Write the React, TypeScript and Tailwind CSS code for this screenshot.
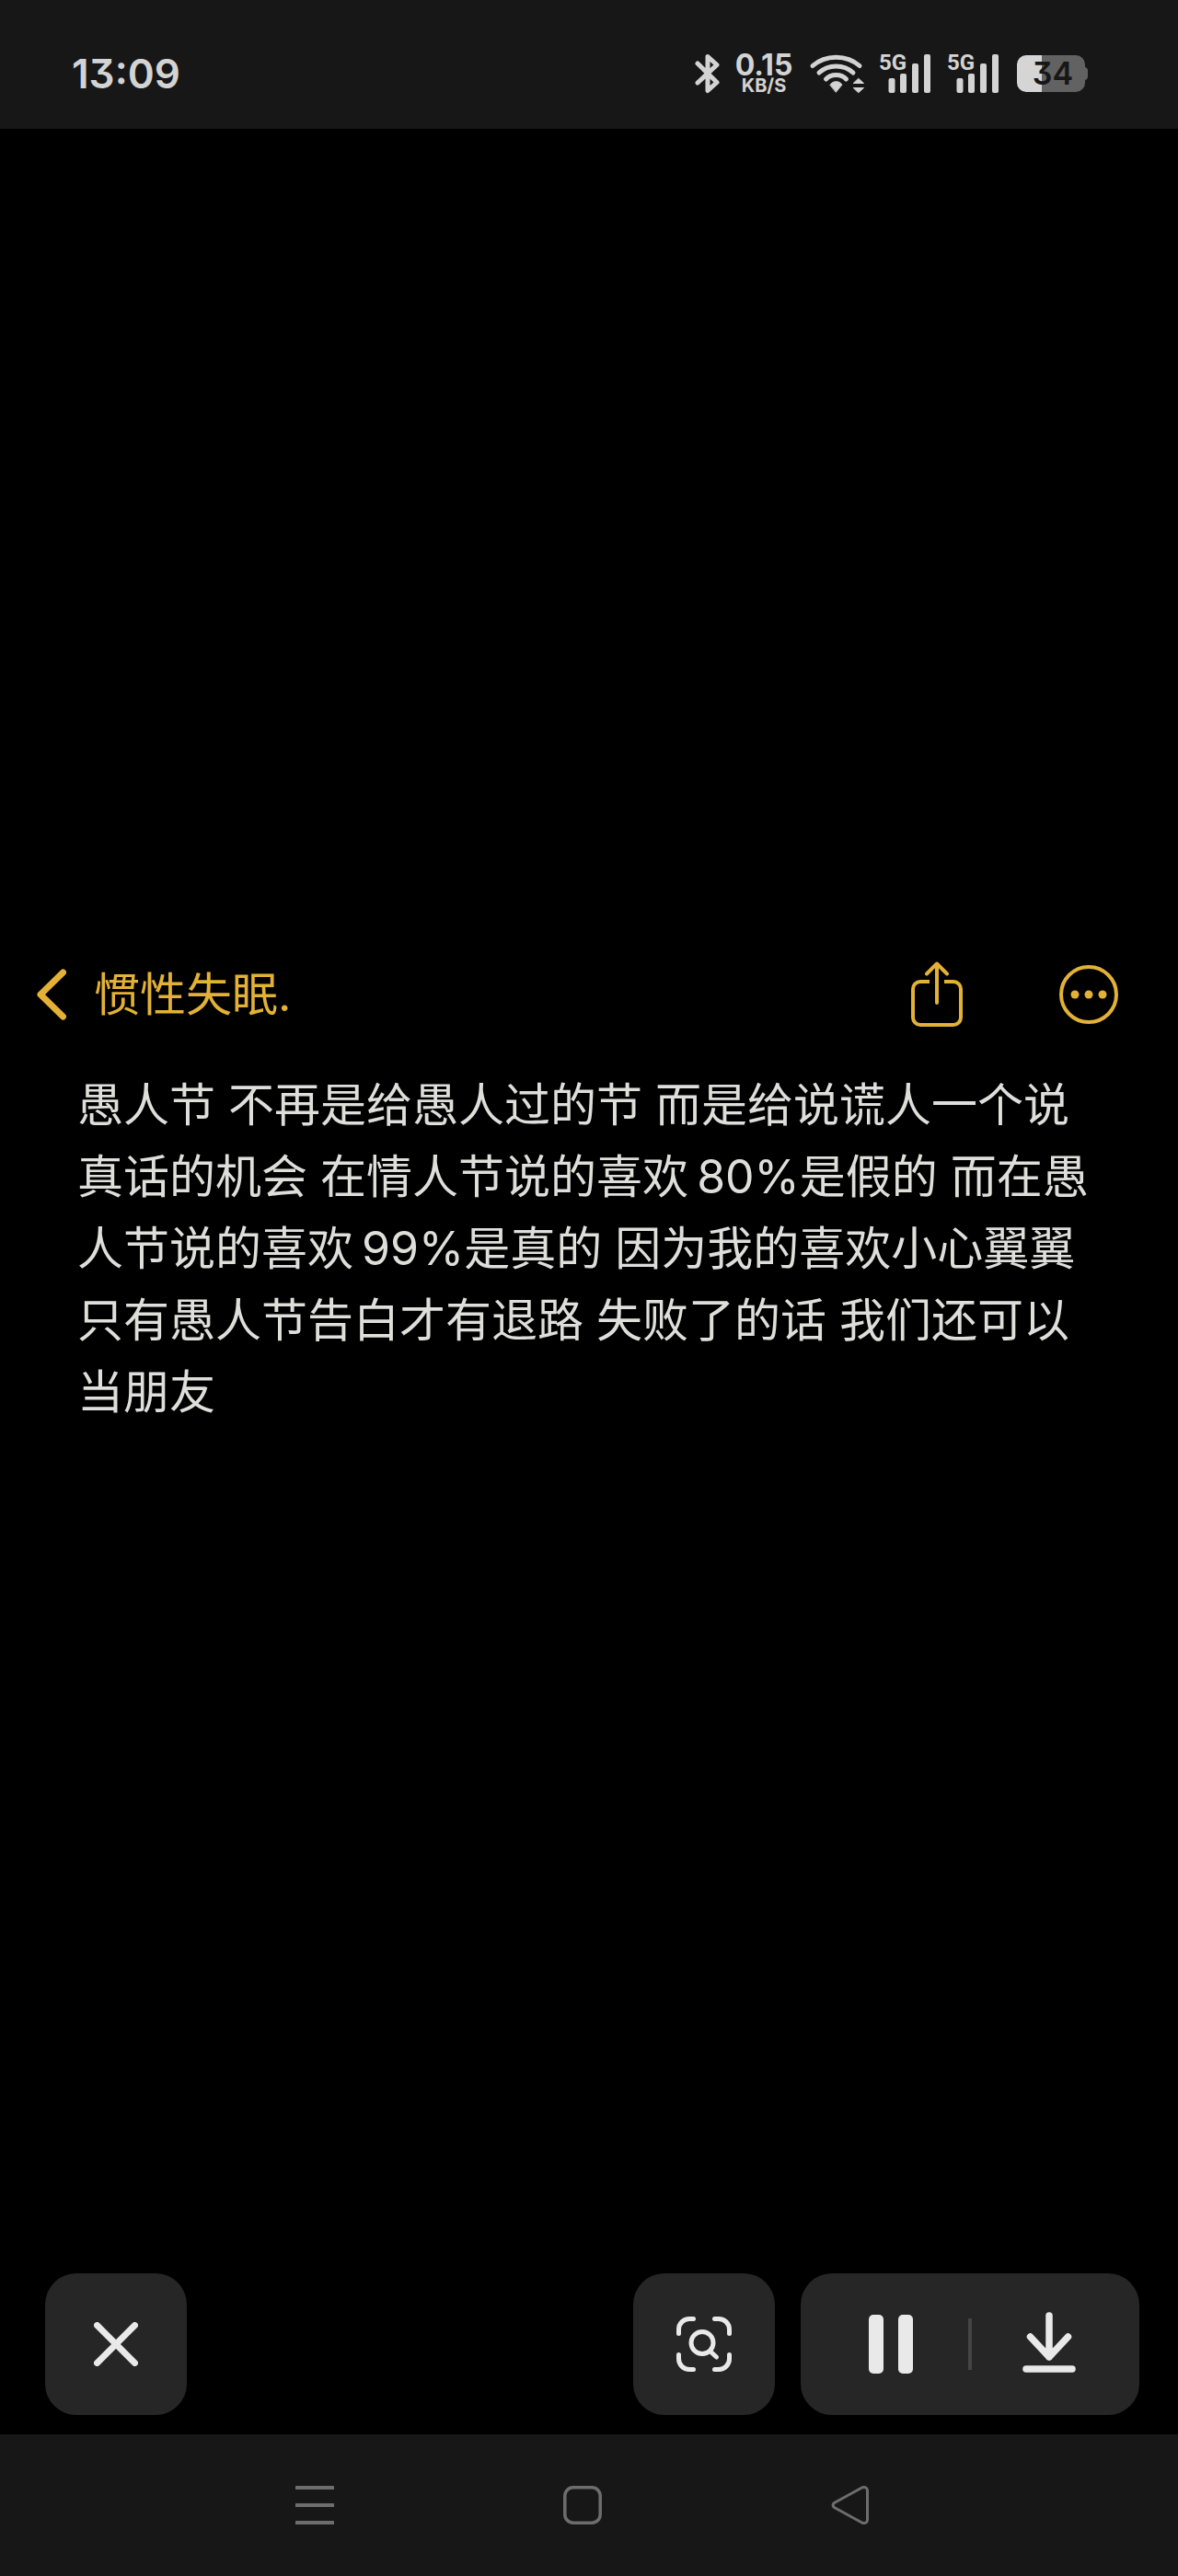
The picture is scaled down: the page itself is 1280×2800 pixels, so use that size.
import React from 'react';

const SignalIcon: React.FC = () => (
  <div className="relative w-[56px] h-[44px]">
    <span className="absolute left-0 top-0 font-['Roboto',sans-serif] text-[24px] leading-[20px] font-bold">5G</span>
    <svg className="w-full h-full" viewBox="0 0 56 44" fill="currentColor" aria-hidden="true">
      <rect x="10.5" y="27" width="7" height="16" rx="2" />
      <rect x="23" y="22" width="7" height="21" rx="2" />
      <rect x="36" y="11" width="7" height="32" rx="2" />
      <rect x="49" y="1" width="7" height="42" rx="2" />
    </svg>
  </div>
);

const StatusBar: React.FC = () => (
  <header className="h-[140px] pt-[20px] pl-[78px] pr-[97px] bg-[#171717] text-[#d3d3d3] flex items-center justify-between">
    <time className="text-[44px] leading-[48px] font-semibold [font-feature-settings:'cv09']">13:09</time>

    <div className="flex items-center">
      <svg className="w-[28px] h-[44px]" viewBox="0 0 28 44" fill="none" stroke="currentColor" strokeWidth="5" strokeLinejoin="round" strokeLinecap="round" aria-label="Bluetooth">
        <path d="M4 11 L25 31.500 L15 40.500 V3.500 L25 12.500 L4 32" />
      </svg>

      {/* Network speed */}
      <div className="ml-[18px] w-[60px] flex flex-col items-center font-bold">
        <span className="text-[32px] leading-[26px]">0.15</span>
        <span className="text-[20px] leading-[18px]">KB/S</span>
      </div>

      <svg className="ml-[19px] w-[62px] h-[44px]" viewBox="0 0 62 44" fill="none" stroke="currentColor" strokeWidth="5" strokeLinecap="round" aria-label="Wi-Fi">
        <path d="M4 13.500 C18 1 41 1 55 13.500" />
        <path d="M11 21 C21 11.500 38 11.500 48 21" />
        <path d="M18.500 28 C24 22 35 22 40.500 28" />
        <path d="M23 34 C26 29.500 33 29.500 36 34 L29.500 42 Z" fill="currentColor" strokeWidth="1" strokeLinejoin="round" />
        <path d="M54 27.500 L59.500 32.500 H48.500 Z M54 42.500 L59.500 37.500 H48.500 Z" fill="currentColor" strokeWidth="1" strokeLinejoin="round" />
      </svg>

      <div className="ml-[14px] flex gap-[18px]">
        <SignalIcon />
        <SignalIcon />
      </div>

      {/* Battery */}
      <div className="relative ml-[20px] w-[78px] h-[40px]">
        <svg className="w-full h-full" viewBox="0 0 78 40" aria-hidden="true">
          <path d="M27 0 H64 a10 10 0 0 1 10 10 V13 a4 4 0 0 1 3 4 V23 a4 4 0 0 1 -3 4 V30 a10 10 0 0 1 -10 10 H27 Z" fill="#626262" />
          <path d="M27 0 H10 a10 10 0 0 0 -10 10 V30 a10 10 0 0 0 10 10 H27 Z" fill="#d5d5d5" />
        </svg>
        <span className="absolute inset-0 text-center text-[34px] leading-[40px] font-semibold text-[#171717] [font-feature-settings:'cv09']">34</span>
      </div>
    </div>
  </header>
);

const NoteHeader: React.FC = () => (
  <div className="h-[80px] pl-[40px] pr-[64px] flex items-center text-[#e2b136]">
    <button type="button" className="flex items-center gap-[30px] text-[50px] leading-[80px]">
      <svg className="w-[32px] h-[56px]" viewBox="0 0 32 56" fill="none" stroke="currentColor" strokeWidth="7" strokeLinecap="round" strokeLinejoin="round" aria-hidden="true">
        <path d="M28.500 4 L4 28 L28.500 52" />
      </svg>
      惯性失眠.
    </button>
    <button type="button" aria-label="分享" className="ml-auto">
      <svg className="w-[56px] h-[72px]" viewBox="0 0 56 72" fill="none" stroke="currentColor" strokeWidth="4" strokeLinecap="round" strokeLinejoin="round">
        <path d="M20 22 H10 a8 8 0 0 0 -8 8 V61 a8 8 0 0 0 8 8 H46 a8 8 0 0 0 8 -8 V30 a8 8 0 0 0 -8 -8 H36" strokeLinecap="butt" />
        <path d="M28 45 V2.500 M17 13.500 L28 2.500 L39 13.500" />
      </svg>
    </button>
    <button type="button" aria-label="更多" className="ml-[104px]">
      <svg className="w-[66px] h-[66px]" viewBox="0 0 66 66" fill="none" stroke="currentColor" strokeWidth="4">
        <circle cx="33" cy="33" r="30" />
        <g fill="currentColor" stroke="none">
          <circle cx="18" cy="33" r="4.500" />
          <circle cx="33" cy="33" r="4.500" />
          <circle cx="48" cy="33" r="4.500" />
        </g>
      </svg>
    </button>
  </div>
);

const ActionBar: React.FC = () => (
  <div className="mt-auto pl-[49px] pr-[42px] pb-[21px] flex text-[#e9e9e9]">
    <button type="button" aria-label="关闭" className="w-[154px] h-[154px] rounded-[34px] bg-[#262626] flex items-center justify-center">
      <svg className="w-[48px] h-[48px]" viewBox="0 0 48 48" fill="none" stroke="currentColor" strokeWidth="7" strokeLinecap="round">
        <path d="M3.500 3.500 L44.500 44.500 M44.500 3.500 L3.500 44.500" />
      </svg>
    </button>

    <button type="button" aria-label="识图" className="ml-auto w-[154px] h-[154px] rounded-[34px] bg-[#262626] flex items-center justify-center">
      <svg className="w-[60px] h-[60px]" viewBox="0 0 60 60" fill="none" stroke="currentColor" strokeWidth="5" strokeLinecap="round">
        <path d="M18.500 2.500 H14 A11.500 11.500 0 0 0 2.500 14 V18.500" />
        <path d="M41.500 2.500 H46 A11.500 11.500 0 0 1 57.500 14 V18.500" />
        <path d="M18.500 57.500 H14 A11.500 11.500 0 0 1 2.500 46 V41.500" />
        <path d="M41.500 57.500 H46 A11.500 11.500 0 0 0 57.500 46 V41.500" />
        <circle cx="28" cy="28.500" r="12" />
        <path d="M37 38 L43.500 44" />
      </svg>
    </button>

    <div className="ml-[28px] w-[368px] h-[154px] px-[14px] rounded-[34px] bg-[#262626] flex items-center">
      <button type="button" aria-label="暂停" className="flex-1 h-full flex items-center justify-center">
        <svg className="w-[48px] h-[64px]" viewBox="0 0 48 64" fill="currentColor">
          <rect width="16" height="64" rx="5" />
          <rect x="32" width="16" height="64" rx="5" />
        </svg>
      </button>
      <span className="w-[4px] h-[56px] bg-[#444444]"></span>
      <button type="button" aria-label="下载" className="flex-1 h-full flex items-center justify-center">
        <svg className="w-[58px] h-[70px]" viewBox="0 0 58 70" fill="none" stroke="currentColor" strokeWidth="7.500" strokeLinecap="round" strokeLinejoin="round">
          <path d="M29 4 V49 M8.500 27 L29 49 L49.500 27" />
          <path d="M4 62 H54" />
        </svg>
      </button>
    </div>
  </div>
);

const NavBar: React.FC = () => (
  <nav className="h-[154px] pl-[196px] pr-[210px] bg-[#171717] text-[#6d6d6d] grid grid-cols-3 items-center">
    <button type="button" aria-label="最近任务" className="flex justify-center">
      <svg className="w-[42px] h-[42px]" viewBox="0 0 42 42" fill="currentColor">
        <rect width="42" height="4" rx="0.500" />
        <rect y="19" width="42" height="4" rx="0.500" />
        <rect y="38" width="42" height="4" rx="0.500" />
      </svg>
    </button>
    <button type="button" aria-label="主页" className="flex justify-center">
      <svg className="w-[42px] h-[42px]" viewBox="0 0 42 42" fill="none" stroke="currentColor" strokeWidth="3.500">
        <rect x="1.800" y="1.800" width="38.400" height="38.400" rx="9" />
      </svg>
    </button>
    <button type="button" aria-label="返回" className="flex justify-center">
      <svg className="w-[42px] h-[42px]" viewBox="0 0 42 42" fill="none" stroke="currentColor" strokeWidth="3" strokeLinejoin="round">
        <path d="M3.500 18.500 L34 1.800 Q39 0.500 39.500 5 V37 Q39 41.500 34 40.200 L3.500 23.500 Q0.500 21 3.500 18.500 Z" />
      </svg>
    </button>
  </nav>
);

export default function App() {
  return (
    <div className="min-h-screen flex flex-col bg-black font-['Inter','Noto_Sans_CJK_SC',sans-serif]">
      <StatusBar />
      <main className="flex-1 pt-[901px] flex flex-col">
        <NoteHeader />
        <p className="mt-[41px] px-[84px] text-[50px] leading-[78px] text-[#dededa]">
          愚人节 不再是给愚人过的节 而是给说谎人一个说真话的机会 在情人节说的喜欢&thinsp;80%是假的 而在愚人节说的喜欢&thinsp;99%是真的 因为我的喜欢小心翼翼 只有愚人节告白才有退路 失败了的话 我们还可以当朋友
        </p>
        <ActionBar />
      </main>
      <NavBar />
    </div>
  );
}
